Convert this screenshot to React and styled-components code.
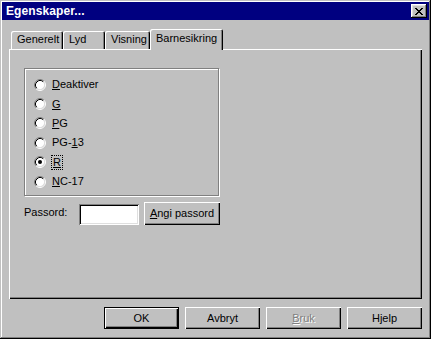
import React from "react";
import styled, { createGlobalStyle } from "styled-components";

const Global = createGlobalStyle`
  html, body { margin: 0; padding: 0; background: #c0c0c0; }
  body { font-family: "Liberation Sans", Arial, sans-serif; font-size: 11px; color: #000; }
  #root { width: 431px; height: 339px; }
`;

const Window = styled.div`
  box-sizing: border-box;
  width: 431px;
  height: 339px;
  padding: 2px;
  background: #c0c0c0;
  display: flex;
  flex-direction: column;
  box-shadow: inset -1px -1px #000, inset 1px 1px #c0c0c0, inset -2px -2px #808080, inset 2px 2px #fff;
`;

const TitleBar = styled.div`
  height: 18px;
  background: #000080;
  display: flex;
  align-items: center;
  justify-content: space-between;
  padding-left: 4px;
  padding-right: 2px;
`;

const Title = styled.span`
  color: #fff;
  font-weight: bold;
  font-size: 12px;
  letter-spacing: 0.1px;
`;

const CloseButton = styled.div`
  box-sizing: border-box;
  width: 16px;
  height: 14px;
  background: #c0c0c0;
  display: flex;
  align-items: center;
  justify-content: center;
  box-shadow: inset -1px -1px #000, inset 1px 1px #fff, inset -2px -2px #808080, inset 2px 2px #dfdfdf;
`;

const Content = styled.div`
  display: flex;
  flex-direction: column;
  padding: 0 7px;
`;

const TabStrip = styled.div`
  position: relative;
  z-index: 1;
  display: flex;
  align-items: flex-end;
  height: 20px;
  margin-top: 9px;
  padding-left: 2px;
`;

const Tab = styled.div`
  box-sizing: border-box;
  width: ${(p) => p.$w}px;
  height: ${(p) => (p.$active ? 21 : 18)}px;
  margin-bottom: ${(p) => (p.$active ? -1 : 0)}px;
  padding-left: 6px;
  padding-top: ${(p) => (p.$active ? 3 : 2)}px;
  line-height: 13px;
  background: #c0c0c0;
  border-radius: 2px 2px 0 0;
  box-shadow: inset 1px 1px #fff, inset -1px 0 #000, inset -2px 0 #808080;
  white-space: nowrap;
`;

const Panel = styled.div`
  box-sizing: border-box;
  height: 250px;
  padding: 19px 15px 0;
  display: flex;
  flex-direction: column;
  box-shadow: inset 1px 1px #fff, inset -1px -1px #000, inset -2px -2px #808080;
`;

const GroupBox = styled.div`
  box-sizing: border-box;
  width: 195px;
  height: 128px;
  border: 1px solid #808080;
  box-shadow: inset 1px 1px #fff, 1px 1px #fff;
  padding: 6px 0 0 9px;
  display: grid;
  grid-template-rows: repeat(6, 19.4px);
`;

const RadioRow = styled.div`
  display: flex;
  align-items: center;
  gap: 6px;
  line-height: 13px;
`;

const Mn = styled.span`
  text-decoration: underline;
  text-underline-offset: 1px;
`;

const Focus = styled.span`
  outline: 1px dotted #000;
  outline-offset: 0px;
  padding: 0 1px;
`;

const PasswordRow = styled.div`
  display: flex;
  align-items: flex-start;
  margin-top: 6px;
`;

const Label = styled.span`
  width: 55px;
  margin-top: 4px;
  line-height: 13px;
`;

const Input = styled.div`
  box-sizing: border-box;
  width: 60px;
  height: 21px;
  margin-top: 2px;
  background: #fff;
  box-shadow: inset 1px 1px #808080, inset -1px -1px #fff, inset 2px 2px #000, inset -2px -2px #dfdfdf;
`;

const Button = styled.div`
  box-sizing: border-box;
  width: ${(p) => p.$w || 75}px;
  height: ${(p) => p.$h || 22}px;
  margin-left: ${(p) => p.$ml || 0}px;
  display: flex;
  align-items: center;
  justify-content: center;
  background: #c0c0c0;
  color: ${(p) => (p.$disabled ? "#808080" : "#000")};
  text-shadow: ${(p) => (p.$disabled ? "1px 1px #fff" : "none")};
  border: ${(p) => (p.$default ? "1px solid #000" : "none")};
  box-shadow: inset 1px 1px #fff, inset -1px -1px #000, inset -2px -2px #808080;
  line-height: 13px;
`;

const ButtonRow = styled.div`
  display: flex;
  justify-content: flex-end;
  gap: 6px;
  margin-top: 8px;
`;

function Radio({ checked }) {
  return (
    <svg width="12" height="12" viewBox="0 0 12 12">
      <circle cx="6" cy="6" r="4.5" fill="#fff" />
      <path d="M2.11 9.89 A5.5 5.5 0 0 1 9.89 2.11" stroke="#808080" fill="none" strokeWidth="1" />
      <path d="M9.89 2.11 A5.5 5.5 0 0 1 2.11 9.89" stroke="#fff" fill="none" strokeWidth="1" />
      <path d="M2.82 9.18 A4.5 4.5 0 0 1 9.18 2.82" stroke="#000" fill="none" strokeWidth="1" />
      <path d="M9.18 2.82 A4.5 4.5 0 0 1 2.82 9.18" stroke="#dfdfdf" fill="none" strokeWidth="1" />
      {checked && <circle cx="6" cy="6" r="2" fill="#000" />}
    </svg>
  );
}

function CloseX() {
  return (
    <svg width="8" height="7" viewBox="0 0 8 7" shapeRendering="crispEdges">
      <path d="M0 0h2v1h-2zM6 0h2v1h-2zM1 1h2v1h-2zM5 1h2v1h-2zM2 2h4v1h-4zM3 3h2v1h-2zM2 4h4v1h-4zM1 5h2v1h-2zM5 5h2v1h-2zM0 6h2v1h-2zM6 6h2v1h-2z" fill="#000" />
    </svg>
  );
}

const ratings = [
  { pre: "", mn: "D", post: "eaktiver" },
  { pre: "", mn: "G", post: "" },
  { pre: "", mn: "P", post: "G" },
  { pre: "PG-", mn: "1", post: "3" },
  { pre: "", mn: "R", post: "", checked: true },
  { pre: "", mn: "N", post: "C-17" },
];

export default function App() {
  return (
    <>
      <Global />
      <Window>
        <TitleBar>
          <Title>Egenskaper...</Title>
          <CloseButton>
            <CloseX />
          </CloseButton>
        </TitleBar>
        <Content>
          <TabStrip>
            <Tab $w={52}>Generelt</Tab>
            <Tab $w={42}>Lyd</Tab>
            <Tab $w={45}>Visning</Tab>
            <Tab $w={73} $active>Barnesikring</Tab>
          </TabStrip>
          <Panel>
            <GroupBox>
              {ratings.map((r, i) => (
                <RadioRow key={i}>
                  <Radio checked={r.checked} />
                  {r.checked ? (
                    <Focus>
                      <Mn>{r.mn}</Mn>
                    </Focus>
                  ) : (
                    <span>
                      {r.pre}
                      <Mn>{r.mn}</Mn>
                      {r.post}
                    </span>
                  )}
                </RadioRow>
              ))}
            </GroupBox>
            <PasswordRow>
              <Label>Passord:</Label>
              <Input />
              <Button $w={76} $h={23} $ml={5}>
                <span>
                  <Mn>A</Mn>ngi passord
                </span>
              </Button>
            </PasswordRow>
          </Panel>
          <ButtonRow>
            <Button $default>OK</Button>
            <Button>Avbryt</Button>
            <Button $disabled>
              <span>
                <Mn>B</Mn>ruk
              </span>
            </Button>
            <Button>Hjelp</Button>
          </ButtonRow>
        </Content>
      </Window>
    </>
  );
}
